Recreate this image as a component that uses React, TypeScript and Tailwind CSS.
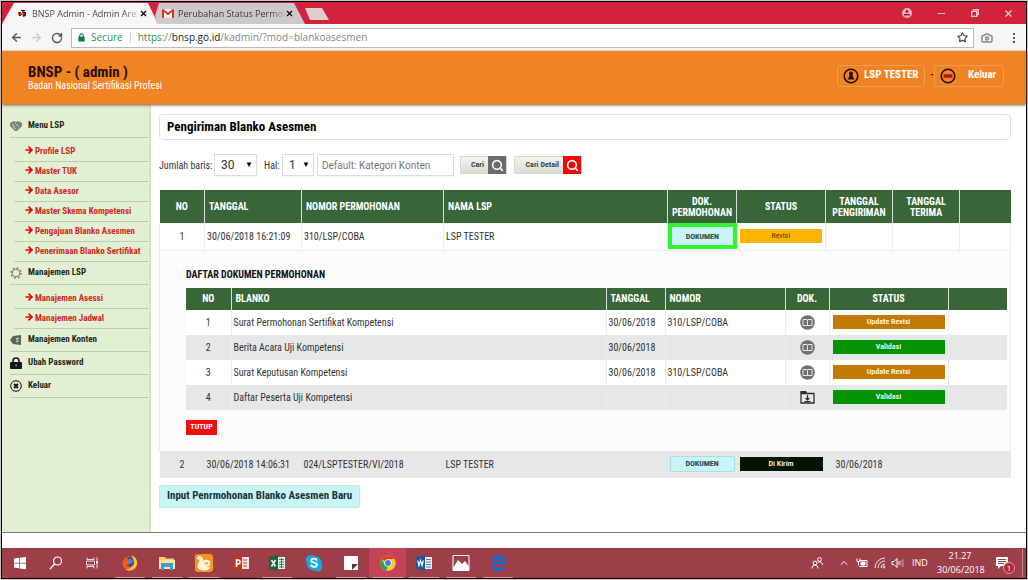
import type { ReactNode } from "react";
import { ArrowLeft, ArrowRight, RotateCw, Star, Camera, Search, X, Minus, ChevronUp } from "lucide-react";

const subLsp = [
  "Profile LSP",
  "Master TUK",
  "Data Asesor",
  "Master Skema Kompetensi",
  "Pengajuan Blanko Asesmen",
  "Penerimaan Blanko Sertifikat",
];
const subManajemen = ["Manajemen Asessi", "Manajemen Jadwal"];

const documents = [
  { no: 1, name: "Surat Permohonan Sertifikat Kompetensi", date: "30/06/2018", nomor: "310/LSP/COBA", icon: "book", status: "Update Revisi" },
  { no: 2, name: "Berita Acara Uji Kompetensi", date: "30/06/2018", nomor: "", icon: "book", status: "Validasi" },
  { no: 3, name: "Surat Keputusan Kompetensi", date: "30/06/2018", nomor: "310/LSP/COBA", icon: "book", status: "Update Revisi" },
  { no: 4, name: "Daftar Peserta Uji Kompetensi", date: "", nomor: "", icon: "folder", status: "Validasi" },
];

function BrowserBar() {
  return (
    <div className="font-['Open_Sans',sans-serif]">
      <div className="flex h-[22px] items-end bg-[#d1233b]">
        <div className="flex h-[21px] w-[156px] shrink-0 items-center bg-[#f7f6f6] pr-[10px] pl-4 [clip-path:polygon(12px_0,146px_0,156px_100%,0_100%)]">
          <svg viewBox="0 0 8 8" className="h-2 w-2 shrink-0">
            <path d="M0 2h3v4H1zM4 1l4 1v4L5 7z" fill="#5b1a10" />
            <path d="M2 3h4v2H2z" fill="#d84a20" />
            <path d="M3 0h4v1H3z" fill="#222" />
          </svg>
          <span className="ml-[6px] flex-1 bg-linear-to-r from-[#444] from-85% to-[#ddd] bg-clip-text text-[9px] whitespace-nowrap text-transparent">BNSP Admin - Admin Are</span>
          <button aria-label="Tutup tab BNSP Admin" className="shrink-0"><X className="h-[9px] w-[9px] text-black" strokeWidth={3} /></button>
        </div>
        <div className="-ml-[3px] flex h-[21px] w-[150px] shrink-0 items-center bg-[#cdc9c8] pr-3 pl-[7px] [clip-path:polygon(4px_0,139px_0,150px_100%,2px_100%,0_60%)]">
          <svg viewBox="0 0 12 9" className="h-[9px] w-3 shrink-0">
            <path d="M1 0h10v9H1z" fill="#f4f4f4" />
            <path d="M1 9V1l5 4 5-4v8" fill="none" stroke="#d93a30" strokeWidth="2" />
          </svg>
          <span className="ml-1 flex-1 bg-linear-to-r from-[#333] from-85% to-[#bbb] bg-clip-text text-[9px] whitespace-nowrap text-transparent">Perubahan Status Permol</span>
          <button aria-label="Tutup tab Perubahan Status" className="shrink-0"><X className="h-[9px] w-[9px] text-black" strokeWidth={3} /></button>
        </div>
        <button aria-label="Tab baru" className="mb-1 h-3 w-6 bg-[#dfcdcd] [clip-path:polygon(0_0,17px_0,24px_100%,5px_100%)]" />
        <div className="ml-auto flex h-full items-center gap-6 pr-3 text-[#f7cfd4]">
          <button aria-label="Pengguna">
            <svg viewBox="0 0 10 10" className="h-[10px] w-[10px]">
              <circle cx="5" cy="5" r="5" fill="#f0b4bc" />
              <circle cx="5" cy="3.5" r="1.5" fill="#a52035" />
              <path d="M2 6h6v1.5H2z" fill="#a52035" />
            </svg>
          </button>
          <button aria-label="Kecilkan"><Minus className="h-[11px] w-[11px]" /></button>
          <button aria-label="Pulihkan">
            <svg viewBox="0 0 8 8" className="h-2 w-2" fill="none" stroke="currentColor" strokeWidth="1.3">
              <path d="M.7 2.3h5v5h-5zM2.5 2.3V.7h4.8v5H5.7" />
            </svg>
          </button>
          <button aria-label="Tutup"><X className="h-[11px] w-[11px]" strokeWidth={2.5} /></button>
        </div>
      </div>
      <div className="flex h-[27px] items-center bg-[#f7f5f5] pr-2 pl-2">
        <button aria-label="Kembali"><ArrowLeft className="h-[13px] w-[13px] text-[#555]" strokeWidth={2.5} /></button>
        <button aria-label="Maju" className="ml-[7px]"><ArrowRight className="h-[13px] w-[13px] text-[#ccc]" strokeWidth={2.5} /></button>
        <button aria-label="Muat ulang" className="ml-2"><RotateCw className="h-3 w-3 text-[#555]" strokeWidth={2.8} /></button>
        <div className="ml-2 flex h-5 flex-1 items-center border border-[#bdbabb] bg-white px-[5px] text-[10px]">
          <svg viewBox="0 0 8 10" className="h-[9px] w-[9px] shrink-0">
            <path d="M2 5V3a2 2 0 0 1 4 0v2" fill="none" stroke="#0b8043" strokeWidth="1.2" />
            <rect x=".5" y="4" width="7" height="5.500" fill="#0b8043" />
          </svg>
          <span className="ml-[5px] text-[#2f8f58]">Secure</span>
          <span className="mx-[7px] h-[11px] w-px bg-[#ccc]" />
          <span className="flex-1 text-[#888]">
            <span className="text-[#2f8f58]">https:</span>//<span className="text-[#222]">bnsp.go.id</span>/kadmin/?mod=blankoasesmen
          </span>
          <button aria-label="Tandai halaman"><Star className="h-[11px] w-[11px] text-[#444]" strokeWidth={2.5} /></button>
        </div>
        <Camera className="ml-[7px] h-3 w-3 text-[#888]" strokeWidth={3} />
        <button aria-label="Menu" className="ml-4 flex w-[9px] flex-col items-center gap-[2px]">
          <span className="h-[2px] w-[2px] bg-[#555]" />
          <span className="h-[2px] w-[2px] bg-[#555]" />
          <span className="h-[2px] w-[2px] bg-[#555]" />
        </button>
      </div>
    </div>
  );
}

function SiteHeader() {
  return (
    <header className="relative flex h-[53px] items-center justify-between bg-[#f08323] pr-[22px] pl-[26px] shadow-[0_1px_3px_#77552f]">
      <div>
        <h1 className="text-[15px] leading-[16px] font-bold text-[#2a0c00]">BNSP - ( admin )</h1>
        <p className="text-[10px] leading-[12px] text-white">Badan Nasional Sertifikasi Profesi</p>
      </div>
      <div className="mb-1 flex items-center text-[11px] font-bold text-white">
        <a href="#profil" className="flex h-[22px] w-[88px] items-center rounded-[3px] border border-[#f59c50] pl-[5px]">
          <svg viewBox="0 0 16 16" className="mr-[5px] h-4 w-4">
            <circle cx="8" cy="8" r="6.8" fill="none" stroke="#2b0e05" strokeWidth="1.6" />
            <path d="M8 3.5a2 2 0 0 1 1.6 3.2L10 9l1.5 2.5h-7L6 9l.4-2.3A2 2 0 0 1 8 3.5z" fill="#2b0e05" />
          </svg>
          LSP TESTER
        </a>
        <span className="w-[9px] text-right text-[#5a2a05]">-</span>
        <a href="#keluar" className="flex h-[22px] w-[70px] items-center rounded-[3px] border border-[#f59c50] pl-[5px]">
          <svg viewBox="0 0 16 16" className="mr-3 h-4 w-4">
            <circle cx="8" cy="8" r="6.8" fill="none" stroke="#2b0e05" strokeWidth="1.6" />
            <path d="M3.5 6.3h9v3.4h-9z" fill="#b01a10" />
          </svg>
          Keluar
        </a>
      </div>
    </header>
  );
}

function MenuItem({ icon, children }: { icon: ReactNode; children: ReactNode }) {
  return (
    <a href="#menu" className="ml-2 flex h-[23px] items-center gap-[6px] border-b border-[#bfceb2] text-[9px] font-bold text-[#1d2a1a]">
      <span className="flex w-3 shrink-0 justify-center">{icon}</span>
      {children}
    </a>
  );
}

function SubMenu({ items }: { items: string[] }) {
  return (
    <ul className="ml-3 pt-1">
      {items.map((item) => (
        <li key={item} className="border-b border-[#bfceb2]">
          <a href="#sub" className="flex h-[19px] items-center pl-[10px] text-[9px] font-bold whitespace-nowrap text-[#cf2b22]">
            <ArrowRight className="mr-px mb-[3px] h-[10px] w-[10px] shrink-0 text-[#e60000]" strokeWidth={4} />
            {item}
          </a>
        </li>
      ))}
    </ul>
  );
}

function Sidebar() {
  return (
    <nav className="w-[149px] shrink-0 border-r-2 border-[#d6e3c6] bg-[#e3efd3] pt-[11px]">
      <MenuItem
        icon={
          <svg viewBox="0 0 12 10" className="h-[10px] w-3">
            <path d="M0 2l4-2 2 1 2-1 4 2v3L7 10H5L0 5z" fill="#7c8478" />
            <path d="M2 3l3 3M5 2l4 4M3 6l3 2" stroke="#d3dcc8" strokeWidth=".8" />
          </svg>
        }
      >
        Menu LSP
      </MenuItem>
      <SubMenu items={subLsp} />
      <MenuItem
        icon={
          <svg viewBox="0 0 12 12" className="h-3 w-3" fill="none" stroke="#7b8374">
            <circle cx="6" cy="6" r="3.8" />
            <circle cx="6" cy="6" r="5" strokeWidth="1.6" strokeDasharray="1.900 2" />
          </svg>
        }
      >
        Manajemen LSP
      </MenuItem>
      <SubMenu items={subManajemen} />
      <MenuItem
        icon={
          <svg viewBox="0 0 12 12" className="h-3 w-3">
            <path d="M3 2l8-1v10l-8-1-3-4z" fill="#5b6356" />
            <path d="M9 4.500c-3-1-3.500 1-1.700 1.500s1.200 2.600-1.600 1.500" fill="none" stroke="#e3efd3" />
          </svg>
        }
      >
        Manajemen Konten
      </MenuItem>
      <MenuItem
        icon={
          <svg viewBox="0 0 12 12" className="h-3 w-3">
            <path d="M3 6V4a3 3 0 0 1 6 0v2" fill="none" stroke="#161616" strokeWidth="1.6" />
            <rect y="5" width="12" height="7" rx="1" fill="#161616" />
            <path d="M5.500 7.500h1.200v2H5.500z" fill="#aab59f" />
          </svg>
        }
      >
        Ubah Password
      </MenuItem>
      <MenuItem
        icon={
          <svg viewBox="0 0 12 12" className="h-3 w-3" fill="none" stroke="#161616">
            <circle cx="6" cy="6" r="5.300" />
            <path d="M4 4l4 4M8 4l-4 4" strokeWidth="1.800" />
          </svg>
        }
      >
        Keluar
      </MenuItem>
    </nav>
  );
}

function Filters() {
  return (
    <form className="mt-[14px] flex h-[22px] items-center text-[10px] text-[#333]" onSubmit={(e) => e.preventDefault()}>
      <label htmlFor="baris" className="w-[55px] whitespace-nowrap">Jumlah baris:</label>
      <div className="relative">
        <select id="baris" className="block h-[22px] w-[43px] appearance-none border border-[#dcdcdc] bg-white pl-[6px] font-['Roboto'] text-[12px] text-[#333] shadow-xs">
          <option>30</option>
          <option>50</option>
        </select>
        <span className="pointer-events-none absolute top-[7px] right-[4px] text-[8px] leading-[8px] text-black">▼</span>
      </div>
      <label htmlFor="hal" className="ml-[7px] w-[18px]">Hal:</label>
      <div className="relative">
        <select id="hal" className="block h-[22px] w-[32px] appearance-none border border-[#dcdcdc] bg-white pl-[6px] font-['Roboto'] text-[12px] text-[#333] shadow-xs">
          <option>1</option>
          <option>2</option>
        </select>
        <span className="pointer-events-none absolute top-[7px] right-[4px] text-[8px] leading-[8px] text-black">▼</span>
      </div>
      <input
        type="text"
        aria-label="Kategori Konten"
        placeholder="Default: Kategori Konten"
        className="ml-[3px] h-[22px] w-[137px] border border-[#dcdcdc] bg-white px-1 font-['Roboto'] text-[10px] shadow-xs placeholder:text-[#777]"
      />
      <button className="ml-[6px] flex h-[18px] w-[47px] items-center justify-end border border-[#d8d8d0] bg-linear-to-b from-[#f4f4ee] to-[#dcdcd2] text-[8px] font-bold text-[#444]">
        <span className="mr-1">Cari</span>
        <span className="flex h-[18px] w-[18px] items-center justify-center bg-[#6b6b6b]"><Search className="h-[13px] w-[13px] text-white" strokeWidth={3} /></span>
      </button>
      <button className="ml-[7px] flex h-[18px] w-[68px] items-center justify-end border border-[#d8d8d0] bg-linear-to-b from-[#f4f4ee] to-[#dcdcd2] text-[8px] font-bold whitespace-nowrap text-[#444]">
        <span className="mr-1">Cari Detail</span>
        <span className="flex h-[18px] w-[18px] items-center justify-center bg-[#f00808]"><Search className="h-[13px] w-[13px] text-white" strokeWidth={3} /></span>
      </button>
    </form>
  );
}

function DocIcon({ kind }: { kind: string }) {
  if (kind === "book") {
    return (
      <svg viewBox="0 0 15 15" className="mx-auto h-[15px] w-[15px]">
        <circle cx="7.500" cy="7.500" r="7.300" fill="#6f7072" />
        <path d="M3 4.500h4l.5.500.5-.5h4v6H8l-.5.500-.5-.5H3z" fill="none" stroke="#e6e6e6" />
        <path d="M7.500 5v6" stroke="#e6e6e6" />
      </svg>
    );
  }
  return (
    <svg viewBox="0 0 15 13" className="mx-auto h-[13px] w-[15px]">
      <path d="M1 2.500h13V12H1z" fill="none" stroke="#2e2e30" strokeWidth="1.300" />
      <path d="M.4 0H6l1.500 2.500H.4z" fill="#2e2e30" />
      <path d="M7.500 4v5M5.500 7l2 2 2-2M4.500 10.500h6" fill="none" stroke="#2e2e30" strokeWidth="1.200" />
    </svg>
  );
}

function DocumentTable() {
  return (
    <table className="w-full table-fixed border-collapse text-left text-[10px]">
      <colgroup>
        <col className="w-[45px]" />
        <col />
        <col className="w-[59px]" />
        <col className="w-[120px]" />
        <col className="w-[44px]" />
        <col className="w-[119px]" />
        <col className="w-[59px]" />
      </colgroup>
      <thead>
        <tr className="h-[22px] bg-[#396639] text-white">
          <th className="border-r border-[#d5dfd5] text-center">NO</th>
          <th className="border-r border-[#d5dfd5] pl-1">BLANKO</th>
          <th className="border-r border-[#d5dfd5] pl-1">TANGGAL</th>
          <th className="border-r border-[#d5dfd5] pl-1">NOMOR</th>
          <th className="border-r border-[#d5dfd5] text-center">DOK.</th>
          <th className="border-r border-[#d5dfd5] text-center">STATUS</th>
          <th />
        </tr>
      </thead>
      <tbody>
        {documents.map((doc) => (
          <tr key={doc.no} className="h-[25px] bg-white text-[#333] even:bg-[#e6e7e8]">
            <td className="border-r border-[#ececec] text-center">{doc.no}</td>
            <td className="border-r border-[#ececec] pl-[2px]">{doc.name}</td>
            <td className="border-r border-[#ececec] pl-[2px]">{doc.date}</td>
            <td className="border-r border-[#ececec] pl-[2px]">{doc.nomor}</td>
            <td className="border-r border-[#ececec]"><DocIcon kind={doc.icon} /></td>
            <td className="border-r border-[#ececec] px-[3px]">
              <button className={`block h-[14px] w-full text-[8px] leading-[14px] font-medium text-white ${doc.status === "Validasi" ? "bg-[#039303]" : "bg-[#c27a06]"}`}>
                {doc.status}
              </button>
            </td>
            <td />
          </tr>
        ))}
      </tbody>
    </table>
  );
}

function RequestTable() {
  return (
    <table className="mt-[14px] w-full table-fixed border-collapse text-left text-[10px] text-[#333]">
      <colgroup>
        <col className="w-[45px]" />
        <col className="w-[97px]" />
        <col className="w-[142px]" />
        <col />
        <col className="w-[69px]" />
        <col className="w-[89px]" />
        <col className="w-[67px]" />
        <col className="w-[67px]" />
        <col className="w-[51px]" />
      </colgroup>
      <thead>
        <tr className="h-[33px] bg-[#396639] leading-[11px] text-white">
          <th className="border-r border-[#d5dfd5] text-center">NO</th>
          <th className="border-r border-[#d5dfd5] pl-1">TANGGAL</th>
          <th className="border-r border-[#d5dfd5] pl-1">NOMOR PERMOHONAN</th>
          <th className="border-r border-[#d5dfd5] pl-1">NAMA LSP</th>
          <th className="border-r border-[#d5dfd5] text-center">DOK. PERMOHONAN</th>
          <th className="border-r border-[#d5dfd5] text-center">STATUS</th>
          <th className="border-r border-[#d5dfd5] text-center">TANGGAL PENGIRIMAN</th>
          <th className="border-r border-[#d5dfd5] text-center">TANGGAL TERIMA</th>
          <th />
        </tr>
      </thead>
      <tbody>
        <tr className="h-[27px] border-b border-[#ececec]">
          <td className="border-x border-[#ececec] text-center">1</td>
          <td className="border-r border-[#ececec] pl-[2px] whitespace-nowrap">30/06/2018 16:21:09</td>
          <td className="border-r border-[#ececec] pl-[2px]">310/LSP/COBA</td>
          <td className="border-r border-[#ececec] pl-[2px]">LSP TESTER</td>
          <td>
            <button className="block h-[26px] w-full border-4 border-[#2ff62f] bg-[#c9f4f6] pt-px text-[8px] font-bold text-[#24464a]">DOKUMEN</button>
          </td>
          <td className="border-r border-[#ececec] px-[3px]">
            <button className="block h-[14px] w-full bg-[#ffb400] text-[8px] leading-[14px] text-[#4d3300]">Revisi</button>
          </td>
          <td className="border-r border-[#ececec]" />
          <td className="border-r border-[#ececec]" />
          <td className="border-r border-[#ececec]" />
        </tr>
        <tr className="bg-[#fcfcfc]">
          <td colSpan={9} className="border-x border-[#ececec] pt-4 pr-[3px] pb-4 pl-[26px]">
            <h3 className="mb-[5px] text-[10px] leading-[16px] font-bold text-[#111]">DAFTAR DOKUMEN PERMOHONAN</h3>
            <DocumentTable />
            <button className="mt-[10px] block h-[15px] w-[31px] bg-[#f20d0d] text-[8px] font-bold text-white">TUTUP</button>
          </td>
        </tr>
        <tr className="h-[27px] bg-[#e6e7e8]">
          <td className="text-center">2</td>
          <td className="pl-[2px] whitespace-nowrap">30/06/2018 14:06:31</td>
          <td className="pl-[2px]">024/LSPTESTER/VI/2018</td>
          <td className="pl-[2px]">LSP TESTER</td>
          <td className="px-[2px]">
            <button className="block h-[16px] w-full rounded-[1px] border border-[#a9dfe2] bg-[#c9f4f6] text-[8px] leading-[14px] font-bold text-[#24464a]">DOKUMEN</button>
          </td>
          <td className="px-[3px]">
            <button className="block h-[14px] w-full bg-[#031503] text-[8px] leading-[14px] font-medium text-white">Di Kirim</button>
          </td>
          <td className="text-center">30/06/2018</td>
          <td />
          <td />
        </tr>
      </tbody>
    </table>
  );
}

function TaskIcon({ label, open, active, children }: { label: string; open?: boolean; active?: boolean; children: ReactNode }) {
  return (
    <button aria-label={label} className={`flex h-full flex-1 flex-col items-center ${active ? "bg-[#c54257]" : ""}`}>
      <span className="flex flex-1 items-center">
        <svg viewBox="0 0 18 18" className="h-[18px] w-[18px]">{children}</svg>
      </span>
      <span className={`h-px w-[30px] ${open ? "bg-[#eb8f9c]" : ""}`} />
    </button>
  );
}

function Taskbar() {
  return (
    <footer className="flex h-[30px] items-center bg-[#9c3f49] font-['Open_Sans',sans-serif] text-[9px] text-white">
      <div className="flex h-full w-[108px]">
        <TaskIcon label="Mulai"><path d="M3 4.500l5-.7v4.900H3zM8.700 3.700L15 3v5.700H8.700zM3 9.400h5v4.900l-5-.7zM8.700 9.400H15v5.800l-6.300-.8z" fill="#fff" /></TaskIcon>
        <TaskIcon label="Cari"><circle cx="10.500" cy="7" r="4" fill="none" stroke="#fff" strokeWidth="1.200" /><path d="M7.600 10L3 15" stroke="#fff" strokeWidth="1.300" /></TaskIcon>
        <TaskIcon label="Tampilan tugas"><path d="M4 3.500v2h7v-2M4 14.500v-2h7v2M3.500 7h8v4h-8zM14 3.500V8M14 10v4.500" fill="none" stroke="#f6dfe2" /><path d="M13 7.500h2v2h-2z" fill="#fff" /></TaskIcon>
      </div>
      <div className="ml-[2px] flex h-full w-[404px]">
        <TaskIcon label="Firefox" open>
          <circle cx="9" cy="9.500" r="7.500" fill="#f4591f" />
          <path d="M11 1.500c5 2 7 8 3 12.500-3 3-7 3-9.500 1.500 7 0 9-6 6.500-14z" fill="#ffc52e" />
          <path d="M6 4c3-3 7 0 7 4.500S8 14 5.500 11c3 0 5-2 3-4.500z" fill="#2a4b9b" />
          <path d="M8 4.500a4 4 0 0 1 4 4l-3 1.500L7 8z" fill="#4586cf" />
        </TaskIcon>
        <TaskIcon label="File Explorer" open>
          <path d="M1 3h6l1 1.500h8V15H1z" fill="#f3cf72" />
          <path d="M1 6h16v9H1z" fill="#fbe3a0" />
          <path d="M3 9h12v7h-3v-3H6v3H3z" fill="#3d9cd6" />
        </TaskIcon>
        <TaskIcon label="UC Browser" open>
          <rect width="18" height="18" rx="3" fill="#f6941d" />
          <path d="M2 5c0-2.500 2-3.500 4-2.500 2.500 1 2.500 3 1.500 5C10 4.500 15 5.500 15.500 9c.3 3-2.500 4.500-4.500 3.500-1.500-.8-1.300-3 .5-3 .8 0 1 .8.5 1.300 1.200.2 1.700-1.500.8-2.400-1.300-1.200-4 .3-3.300 2.700.6 2 3.500 2.400 6 1.900-.5 2-2.500 3.500-6 3.500C5 16.500 2 14.500 2.500 11c.3-2 2-3 1.800-4.500C4 5.500 3 5 2 5z" fill="#fff6df" />
          <circle cx="5" cy="4.300" r=".7" fill="#f6941d" />
        </TaskIcon>
        <TaskIcon label="PowerPoint">
          <path d="M9 3h8v12H9z" fill="#f7e6e0" />
          <path d="M11 6h4M11 9h4M11 12h4" stroke="#c43c20" />
          <path d="M1 3l9-2v16l-9-2z" fill="#c43818" />
          <path d="M4.500 13V6H6a2 2 0 0 1 0 4H4.500" fill="none" stroke="#fff" strokeWidth="1.500" />
        </TaskIcon>
        <TaskIcon label="Excel" open>
          <path d="M9 3h8v12H9z" fill="#e6f0e8" />
          <path d="M11 5.500h5M11 8h5M11 10.500h5M11 13h5M13.500 4v10" stroke="#2f8a55" />
          <path d="M1 3l9-2v16l-9-2z" fill="#12683b" />
          <path d="M3.500 6l4 6.500M7.500 6l-4 6.500" stroke="#fff" strokeWidth="1.500" />
        </TaskIcon>
        <TaskIcon label="Skype">
          <path d="M5 1.200a8 8 0 0 1 5 .8 7 7 0 0 1 6.500 8.500 4.500 4.500 0 0 1-6.500 6A7.500 7.500 0 0 1 1.600 8 4.500 4.500 0 0 1 5 1.200z" fill="#18a6e0" />
          <path d="M12 6.500C11 4 6.300 4.200 6.300 6.500c0 3 5.700 1.500 5.700 4.300 0 2.500-5 2.700-6.200-.2" fill="none" stroke="#fff" strokeWidth="1.800" />
        </TaskIcon>
        <TaskIcon label="Sticky Notes" open>
          <path d="M2 2h14v8h-6v6H2z" fill="#fff" />
          <path d="M10 10h6l-6 6z" fill="#6a2f36" />
          <path d="M16 10v6h-6z" fill="#fff" />
        </TaskIcon>
        <TaskIcon label="Chrome" open active>
          <circle cx="9" cy="9" r="7.800" fill="#fbc928" />
          <path d="M9 9L2.300 5A7.800 7.800 0 0 1 15.700 5H9z" fill="#df3f32" />
          <path d="M2.300 5L6 11.500l3 1.300-2 3.700A7.800 7.800 0 0 1 2.300 5z" fill="#2f9e4c" />
          <circle cx="9" cy="9" r="3.800" fill="#f5f5f5" />
          <circle cx="9" cy="9" r="2.900" fill="#3c7fe0" />
        </TaskIcon>
        <TaskIcon label="Word" open>
          <path d="M9 3h8v12H9z" fill="#e8eef8" />
          <path d="M11 5.500h5M11 8h5M11 10.500h5M11 13h5" stroke="#5f83bf" />
          <path d="M1 3l9-2v16l-9-2z" fill="#28539c" />
          <path d="M2.700 6.500l1.200 5 1.600-5 1.600 5 1.200-5" fill="none" stroke="#fff" strokeWidth="1.200" />
        </TaskIcon>
        <TaskIcon label="Foto" open>
          <path d="M1 1.500h16v15H1z" fill="none" stroke="#fff" />
          <path d="M1 14l5-8 4 4 3-3 4 6v3H1z" fill="#fff" />
        </TaskIcon>
        <TaskIcon label="Edge" open>
          <path d="M1.500 8.500C2.500 3.500 6 1 9.500 1c5 0 7.500 4 7 9H6.500c.5 4 5.500 4.500 9 2.500v3C9 19 2 16 3.500 10 4 8 5.500 6.500 7.500 5.800 4.500 5.800 2.500 7 1.500 8.500zM6.500 7.500h5.500c0-3.500-5-3.500-5.500 0z" fill="#1d6bc4" />
        </TaskIcon>
      </div>
      <div className="ml-auto flex h-full items-center">
        <svg viewBox="0 0 12 12" className="h-3 w-3" fill="none" stroke="#fff">
          <circle cx="8.500" cy="2.500" r="1.900" />
          <circle cx="4" cy="6" r="1.900" />
          <path d="M1 11.500c0-4.500 6-4.500 6 0M7 5.500c2-1.500 4.500 0 4.500 2.500" />
        </svg>
        <ChevronUp className="ml-[15px] h-3 w-3" />
        <svg viewBox="0 0 12 10" className="ml-[6px] h-[10px] w-3" fill="none" stroke="#fff">
          <path d="M3.500 2.500h7.500v6H3.500M1 .5v3h3v-3M2.500 3.500v4" />
          <path d="M5 4h4v3H5z" fill="#fff" />
        </svg>
        <svg viewBox="0 0 12 12" className="ml-[6px] h-3 w-3" fill="none" stroke="#f4dcdf">
          <path d="M1 11A10 10 0 0 1 11 1M4 11a7 7 0 0 1 7-7M7 11a4 4 0 0 1 4-4" />
          <circle cx="10" cy="10" r="1" />
        </svg>
        <svg viewBox="0 0 13 12" className="ml-[5px] h-3 w-[13px]" fill="none" stroke="#fff">
          <path d="M1 4.500h2l3-3v9l-3-3H1zM8 4v4" />
          <path d="M10 3v6M12 2v8" stroke="#d39aa1" />
        </svg>
        <span className="ml-2 w-[17px]">IND</span>
        <div className="ml-2 w-[46px] text-center leading-[14px]">
          <div>21.27</div>
          <div>30/06/2018</div>
        </div>
        <button aria-label="Notifikasi" className="relative ml-[12px] h-[22px] w-5">
          <svg viewBox="0 0 14 14" className="absolute top-[4px] left-0 h-[14px] w-[14px]">
            <path d="M1 1h12v9H6l-3 3v-3H1z" fill="#fff" />
            <path d="M3 3.500h8M3 5.500h8M3 7.500h6" stroke="#9c3f49" />
          </svg>
          <span className="absolute right-0 bottom-0 h-3 w-3 rounded-full border border-[#e8939f] bg-[#b02a41] text-[8px] leading-[10px]">1</span>
        </button>
        <span className="mr-[3px] ml-[7px] h-[28px] w-px bg-[#c98a91]" />
      </div>
    </footer>
  );
}

export default function App() {
  return (
    <div className="flex min-h-screen flex-col bg-[#c8c8c8] p-px font-['Roboto_Condensed','Roboto',sans-serif]">
      <div className="flex flex-1 flex-col border border-black bg-white">
        <BrowserBar />
        <SiteHeader />
        <div className="flex flex-1 border-b border-[#7d7d76]">
          <Sidebar />
          <main className="min-w-0 flex-1 pt-[10px] pr-[15px] pb-4 pl-2">
            <h2 className="h-[26px] rounded-[4px] border border-[#dfe2e4] pl-[7px] text-[13px] leading-[24px] font-bold text-black">Pengiriman Blanko Asesmen</h2>
            <Filters />
            <RequestTable />
            <button className="mt-[7px] block h-[23px] rounded-[2px] border border-[#bfe6e8] bg-[#c9f4f6] px-[7px] text-[11px] font-bold text-[#163538]">Input Penrmohonan Blanko Asesmen Baru</button>
          </main>
        </div>
        <div className="h-[15px]" />
        <Taskbar />
      </div>
    </div>
  );
}
